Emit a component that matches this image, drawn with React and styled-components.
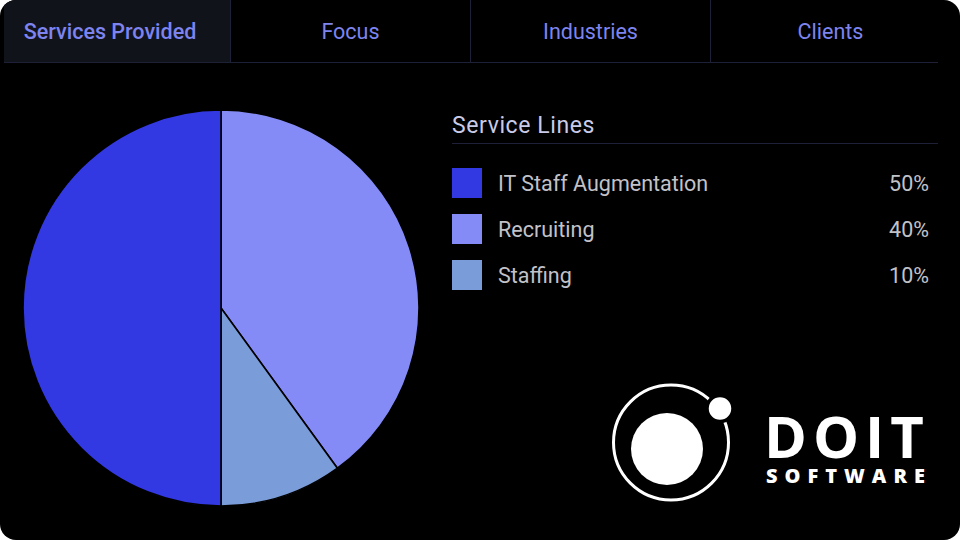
import React from "react";
import styled, { createGlobalStyle } from "styled-components";

const GlobalStyle = createGlobalStyle`
	html, body {
		margin: 0;
		padding: 0;
		background: #ffffff;
	}
	* {
		box-sizing: border-box;
	}
`;

const tabs = [
	{ label: "Services Provided", active: true, width: 226, shift: -14 },
	{ label: "Focus", width: 240, shift: 0 },
	{ label: "Industries", width: 240, shift: 0 },
	{ label: "Clients", width: 228, shift: 12 },
];

const services = [
	{ name: "IT Staff Augmentation", value: 50, color: "#3238e2" },
	{ name: "Recruiting", value: 40, color: "#858bf6" },
	{ name: "Staffing", value: 10, color: "#7a9cd8" },
];

// slices start at 12 o'clock and run clockwise: recruiting, staffing, then IT
const pieOrder = [1, 2, 0];

function slicePath(cx, cy, r, from, to) {
	const a0 = (from / 100) * Math.PI * 2;
	const a1 = (to / 100) * Math.PI * 2;
	const x0 = cx + r * Math.sin(a0);
	const y0 = cy - r * Math.cos(a0);
	const x1 = cx + r * Math.sin(a1);
	const y1 = cy - r * Math.cos(a1);
	const large = to - from > 50 ? 1 : 0;
	return `M${cx} ${cy} L${x0} ${y0} A${r} ${r} 0 ${large} 1 ${x1} ${y1} Z`;
}

const PieChart = () => {
	let start = 0;
	return (
		<svg width="400" height="400" viewBox="0 0 400 400">
			{pieOrder.map(i => {
				const s = services[i];
				const d = slicePath(200, 200, 198, start, start + s.value);
				start += s.value;
				return (
					<path key={s.name} d={d} fill={s.color} stroke="#000" strokeWidth="1.6" />
				);
			})}
		</svg>
	);
};

const LogoMark = () => (
	<svg width="130" height="130" viewBox="0 0 130 130">
		<circle cx="65" cy="65.5" r="57.5" fill="none" stroke="#fff" strokeWidth="3" />
		<circle cx="61" cy="72" r="36" fill="#fff" />
		<circle cx="114" cy="31.5" r="13" fill="#fff" stroke="#000" strokeWidth="3.5" />
	</svg>
);

const App = () => (
	<>
		<GlobalStyle />
		<Card>
			<TabBar>
				{tabs.map(t => (
					<Tab key={t.label} active={t.active} w={t.width} shift={t.shift}>
						{t.label}
					</Tab>
				))}
			</TabBar>
			<Body>
				<PieWrap>
					<PieChart />
				</PieWrap>
				<Side>
					<Heading>Service Lines</Heading>
					<Legend>
						{services.map(s => (
							<LegendRow key={s.name}>
								<Swatch color={s.color} />
								<LegendName>{s.name}</LegendName>
								<LegendValue>{s.value}%</LegendValue>
							</LegendRow>
						))}
					</Legend>
					<Logo>
						<LogoMark />
						<Wordmark>
							<Big>DOIT</Big>
							<Small>SOFTWARE</Small>
						</Wordmark>
					</Logo>
				</Side>
			</Body>
		</Card>
	</>
);

export default App;

const Card = styled.div`
	width: 960px;
	height: 540px;
	background: #000;
	border-radius: 16px;
	overflow: hidden;
	font-family: Roboto, "Noto Sans", sans-serif;
`;

const TabBar = styled.div`
	margin-left: 4px;
	width: 934px;
	height: 63px;
	display: flex;
	border-bottom: 1px solid #1d2036;
`;

const Tab = styled.div`
	width: ${({ w }) => w}px;
	height: 100%;
	display: flex;
	align-items: center;
	justify-content: center;
	padding-left: ${({ shift }) => (shift > 0 ? shift : 0)}px;
	padding-right: ${({ shift }) => (shift < 0 ? -shift : 0)}px;
	background: ${({ active }) => (active ? "#11131a" : "transparent")};
	color: #7d84f0;
	font-size: 21.5px;
	font-weight: ${({ active }) => (active ? 500 : 400)};
	& + & {
		border-left: 1px solid #1d2036;
	}
`;

const Body = styled.div`
	display: flex;
`;

const PieWrap = styled.div`
	padding: 45px 0 0 21px;
	width: 452px;
	flex-shrink: 0;
`;

const Side = styled.div`
	width: 486px;
	display: flex;
	flex-direction: column;
`;

const Heading = styled.h2`
	margin: 49px 0 0;
	padding-bottom: 4px;
	border-bottom: 1px solid #1d2036;
	font-size: 23px;
	line-height: 27px;
	letter-spacing: 0.6px;
	font-weight: 400;
	color: #c9cbe9;
`;

const Legend = styled.div`
	margin-top: 24px;
	padding-right: 9px;
	display: flex;
	flex-direction: column;
	gap: 16px;
`;

const LegendRow = styled.div`
	height: 30px;
	display: flex;
	align-items: center;
	font-size: 21.5px;
	color: #c2c2c8;
`;

const Swatch = styled.span`
	width: 30px;
	height: 30px;
	background: ${({ color }) => color};
	margin-right: 16px;
`;

const LegendName = styled.span`
	flex: 1;
`;

const LegendValue = styled.span``;

const Logo = styled.div`
	margin: 87px 0 0 154px;
	display: flex;
	align-items: flex-start;
	gap: 28px;
`;

const Wordmark = styled.div`
	margin-top: 30px;
	display: flex;
	flex-direction: column;
	color: #fff;
	font-family: "Open Sans", "DejaVu Sans", sans-serif;
	font-weight: 700;
`;

const Big = styled.div`
	font-size: 58px;
	line-height: 58px;
	letter-spacing: 6px;
`;

const Small = styled.div`
	margin-top: 1px;
	padding-left: 2px;
	font-size: 20px;
	line-height: 20px;
	font-weight: 800;
	letter-spacing: 7px;
`;
